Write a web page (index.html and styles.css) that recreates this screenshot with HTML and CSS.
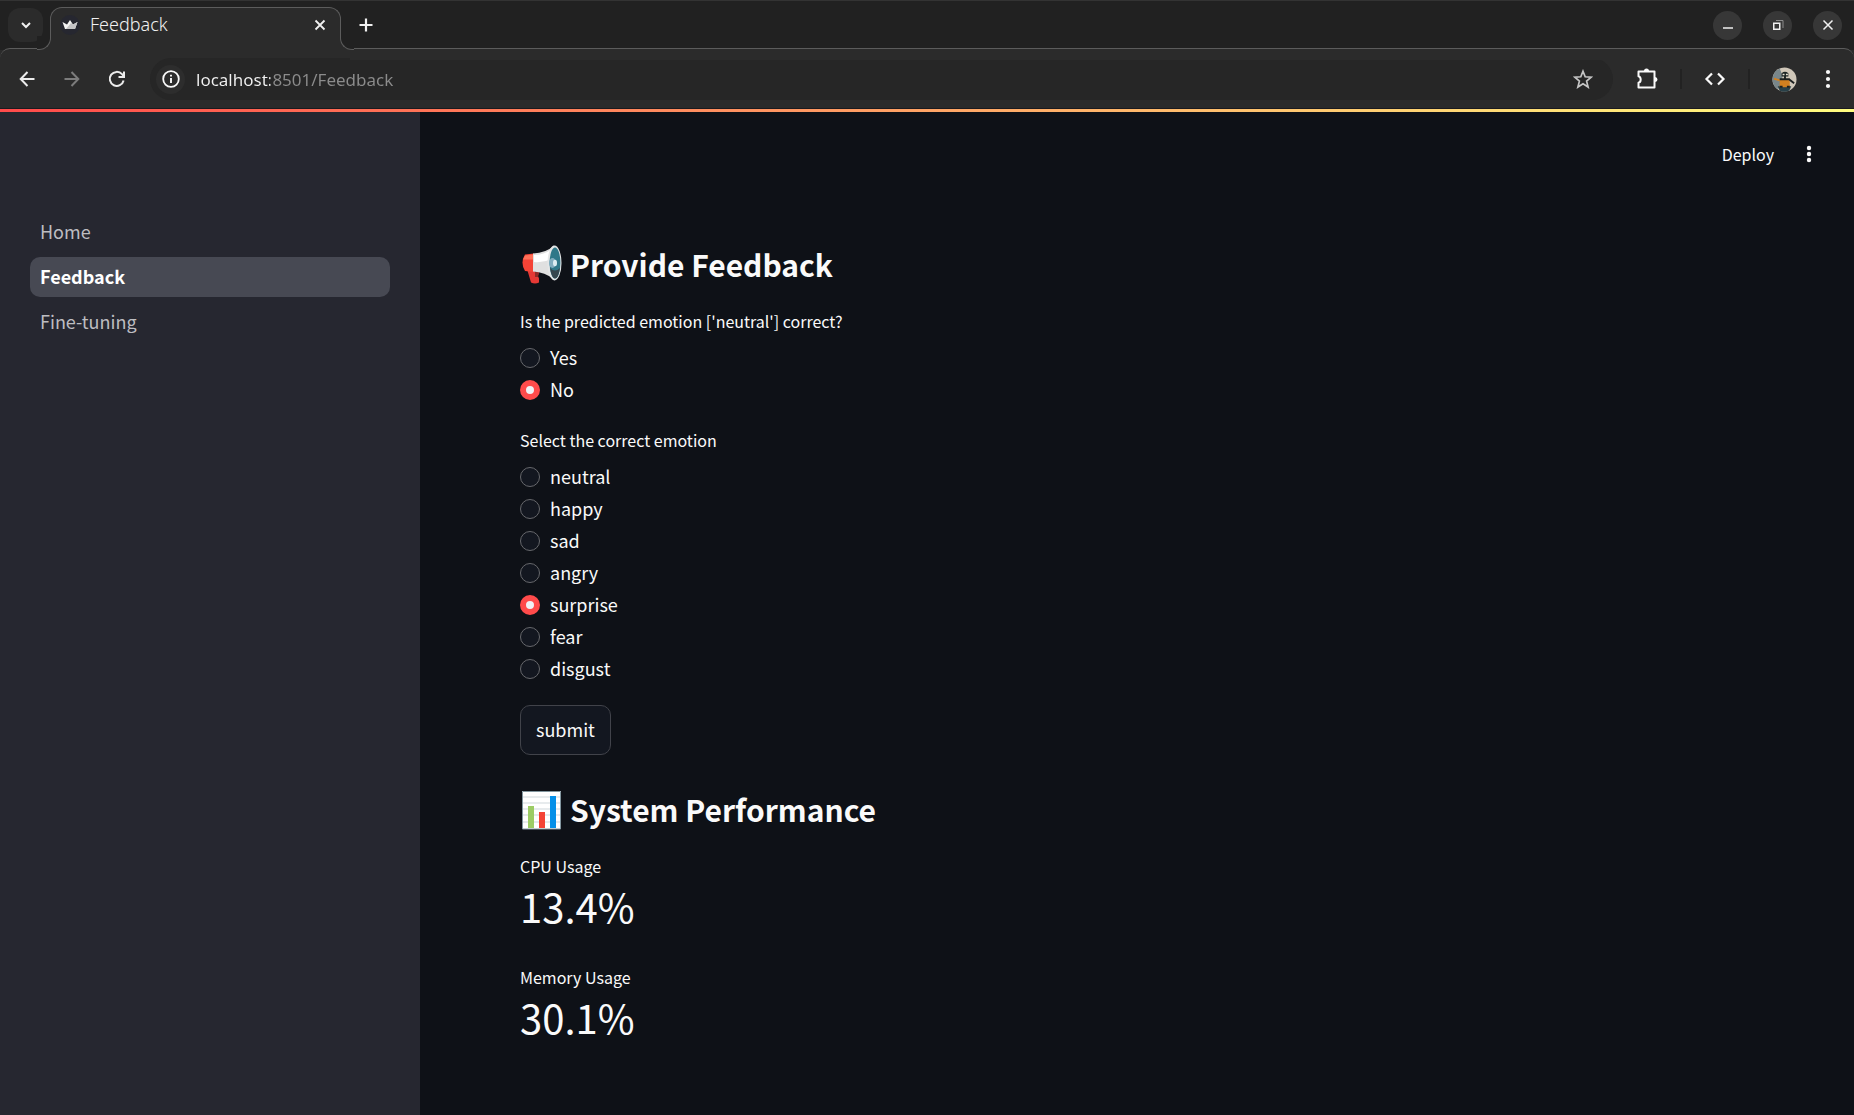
FILE: index.html
```html
<!DOCTYPE html>
<html lang="en">
<head>
<meta charset="utf-8">
<title>Feedback</title>
<link rel="stylesheet" href="styles.css">
</head>
<body>
<div class="window">
  <header class="tabstrip">
    <button class="tab-search" aria-label="Search tabs"><svg width="12" height="12" viewBox="0 0 12 12"><path d="M2 4l4 4 4-4" fill="none" stroke="currentColor" stroke-width="2"/></svg></button>
    <div class="tab">
      <svg class="favicon" width="20" height="20" viewBox="0 0 20 20"><circle cx="10" cy="10" r="10" fill="#262730"/><path d="M2.500 7l4.500 2.500L10 5l3 4.500L17.500 7 15 14H5z" fill="#f4f4f4"/><path d="M17.500 7L13 9.500 11 8l-5 6h9z" fill="#c4c4c6"/></svg>
      <span class="tab-title">Feedback</span>
      <button class="tab-close" aria-label="Close tab"><svg width="12" height="12" viewBox="0 0 12 12"><path d="M1.500 1.500l9 9M10.500 1.500l-9 9" stroke="currentColor" stroke-width="1.800"/></svg></button>
    </div>
    <button class="new-tab" aria-label="New tab"><svg width="14" height="14" viewBox="0 0 14 14"><path d="M7 .5v13M.5 7h13" stroke="currentColor" stroke-width="2.200"/></svg></button>
    <div class="window-controls">
      <button aria-label="Minimize"><svg width="12" height="12" viewBox="0 0 12 12"><path d="M1 9h10" stroke="currentColor" stroke-width="1.500"/></svg></button>
      <button aria-label="Restore"><svg width="12" height="12" viewBox="0 0 12 12"><path d="M1.750 4.250h6v6h-6z" fill="none" stroke="currentColor" stroke-width="1.500"/><path d="M4 1.500h7V9" fill="none" stroke="#8c8c8c" stroke-width="1"/></svg></button>
      <button aria-label="Close"><svg width="12" height="12" viewBox="0 0 12 12"><path d="M1.500 1.500l9 9M10.500 1.500l-9 9" stroke="currentColor" stroke-width="1.500"/></svg></button>
    </div>
  </header>

  <div class="toolbar">
    <button class="nav-button" aria-label="Back"><svg width="16" height="16" viewBox="0 0 16 16"><path d="M15.500 8H2M8.500 1L1.700 8l6.800 7" fill="none" stroke="currentColor" stroke-width="2"/></svg></button>
    <button class="nav-button nav-button-off" aria-label="Forward"><svg width="16" height="16" viewBox="0 0 16 16"><path d="M.5 8H14M7.500 1l6.800 7-6.800 7" fill="none" stroke="currentColor" stroke-width="2"/></svg></button>
    <button class="nav-button" aria-label="Reload"><svg width="18" height="18" viewBox="0 0 18 18"><path d="M15.600 10.500A7 7 0 1 1 14 4.200L16 6.500" fill="none" stroke="currentColor" stroke-width="2"/><path d="M16 1.500V7h-5.500" fill="none" stroke="currentColor" stroke-width="2"/></svg></button>
    <div class="omnibox">
      <button class="site-info" aria-label="Site information"><svg width="18" height="18" viewBox="0 0 18 18"><circle cx="9" cy="9" r="7.800" fill="none" stroke="currentColor" stroke-width="1.800"/><path d="M9 8v5M9 4.800v1.800" stroke="currentColor" stroke-width="1.900"/></svg></button>
      <input class="address" type="text" aria-label="Address" value="localhost:8501/Feedback">
      <button class="star" aria-label="Bookmark"><svg width="20" height="20" viewBox="0 0 20 20"><path d="M10 2.200l2.200 5.600 6 .4-4.600 3.900 1.500 5.900-5.100-3.300-5.100 3.300 1.500-5.900L1.800 8.200l6-.4z" fill="none" stroke="currentColor" stroke-width="1.700"/></svg></button>
    </div>
    <div class="actions">
      <button aria-label="Extensions"><svg width="22" height="22" viewBox="0 0 22 22"><path d="M2.500 3.500h16v16h-16v-4.700c2.900-.6 2.900-6 0-6.600z" fill="none" stroke="currentColor" stroke-width="2" stroke-linejoin="round"/><path d="M8 3a2.500 2.500 0 0 1 5 0zM19 9a2.500 2.500 0 0 1 0 5z" fill="currentColor"/></svg></button>
      <i class="divider"></i>
      <button aria-label="Developer tools"><svg width="22" height="22" viewBox="0 0 22 22"><path d="M8 5.500L2.500 11 8 16.500M14 5.500l5.500 5.500-5.500 5.500" fill="none" stroke="currentColor" stroke-width="2.200"/></svg></button>
      <i class="divider"></i>
      <button aria-label="Profile"><svg width="25" height="25" viewBox="0 0 26 26"><circle cx="13" cy="13" r="12.500" fill="#cfc6b8"/><path d="M2 7A12.500 12.500 0 0 1 8 1.600L11 9 9 22 5 22.500A12.500 12.500 0 0 1 2 7z" fill="#78868a"/><path d="M6 20h14l-2 4.500a12.500 12.500 0 0 1-10 .3z" fill="#284048"/><path d="M10 6.500q3.500-3 7 0V10h-2.500v3h-2v-3H10z" fill="#1c2424"/><path d="M11 7h2v1.500h-2zM14.500 7h2v1.500h-2z" fill="#e8e4d4"/><path d="M8 13h10.500v8H8z" fill="#d08020"/><path d="M8 14l-6-2" stroke="#d08020" stroke-width="2"/><path d="M8 12.800h10.500M18 13l5 4M8 20.500h3M15.500 20.500h3" stroke="#1c2020" stroke-width="2"/></svg></button>
      <button class="browser-menu" aria-label="Browser menu"><svg width="6" height="20" viewBox="0 0 6 20"><g fill="currentColor"><circle cx="3" cy="3" r="2.100"/><circle cx="3" cy="10" r="2.100"/><circle cx="3" cy="17" r="2.100"/></g></svg></button>
    </div>
  </div>

  <div class="decoration"></div>

  <div class="app">
    <nav class="sidebar">
      <a href="#home">Home</a>
      <a class="current" href="#feedback" aria-current="page">Feedback</a>
      <a href="#fine-tuning">Fine-tuning</a>
    </nav>
    <div class="page">
      <div class="app-header">
        <button class="deploy">Deploy</button>
        <button class="app-menu" aria-label="Main menu"><svg width="6" height="18" viewBox="0 0 6 18"><g fill="currentColor"><circle cx="3" cy="3" r="2.200"/><circle cx="3" cy="9" r="2.200"/><circle cx="3" cy="15" r="2.200"/></g></svg></button>
      </div>
      <main class="content">
        <h2>
          <svg width="42" height="42" viewBox="0 0 42 42" aria-hidden="true"><path d="M7 25l7 1 1 2 4 0-1 4 1 2.500v4q-4 2-8 0z" fill="#e53935"/><path d="M15 28h4l-1 5h-3z" fill="#8e2a26"/><path d="M5 10.500q-5 8 0 16.500l9 1V9.500z" fill="#f44336"/><path d="M5 11.500l9-1v5H3z" fill="#ff7058"/><path d="M13 9.500Q26 9 34 1.500v34Q25 28 13 27.500z" fill="#e0e0e0"/><path d="M14 11q10 0 18-6v10q-9 4-18 3z" fill="#fff"/><ellipse cx="34.500" cy="19" rx="7" ry="17.500" fill="#e4e6e7"/><ellipse cx="35" cy="19" rx="5.400" ry="15.500" fill="#2f7889"/><path d="M30 24q5 5 10 0-1.500 10-5 10.500-3.500-.5-5-10.500z" fill="#37474f"/><ellipse cx="32.500" cy="19" rx="3.500" ry="5" fill="#82aec0"/><ellipse cx="35" cy="19" rx="2" ry="3.300" fill="#dcedf2"/></svg>
          <span>Provide Feedback</span>
        </h2>
        <form>
          <fieldset>
            <legend>Is the predicted emotion ['neutral'] correct?</legend>
            <label><input type="radio" name="correct"><span>Yes</span></label>
            <label><input type="radio" name="correct" checked><span>No</span></label>
          </fieldset>
          <fieldset>
            <legend>Select the correct emotion</legend>
            <label><input type="radio" name="emotion"><span>neutral</span></label>
            <label><input type="radio" name="emotion"><span>happy</span></label>
            <label><input type="radio" name="emotion"><span>sad</span></label>
            <label><input type="radio" name="emotion"><span>angry</span></label>
            <label><input type="radio" name="emotion" checked><span>surprise</span></label>
            <label><input type="radio" name="emotion"><span>fear</span></label>
            <label><input type="radio" name="emotion"><span>disgust</span></label>
          </fieldset>
          <button class="submit" type="submit">submit</button>
        </form>
        <h2>
          <svg width="42" height="42" viewBox="0 0 42 42" aria-hidden="true"><path d="M2 2h39v38H2z" fill="#fff"/><path d="M3 8h37M3 14h37M3 20h37M3 26h37M3 33h37" stroke="#cfd8dc" stroke-width="1.200"/><path d="M2.500 2.500h38v37.500h-38z" fill="none" stroke="#82969f"/><path d="M8 17h6v22H8z" fill="#9ccc65"/><path d="M19 23h6v16h-6z" fill="#f44336"/><path d="M30 7h6v32h-6z" fill="#0590e8"/></svg>
          <span>System Performance</span>
        </h2>
        <dl>
          <div><dt>CPU Usage</dt><dd>13.4%</dd></div>
          <div><dt>Memory Usage</dt><dd>30.1%</dd></div>
        </dl>
      </main>
    </div>
  </div>
</div>
</body>
</html>
```
FILE: styles.css
```css
* { box-sizing: border-box; }
body {
  margin: 0;
  background: #0e1117;
  color: #fafafa;
  font: 18px/30px "Noto Sans CJK SC", sans-serif;
}
button {
  display: flex;
  align-items: center;
  justify-content: center;
  padding: 0;
  border: 0;
  background: none;
  color: inherit;
  font: inherit;
}
svg { display: block; flex: none; }

.window { display: flex; flex-direction: column; min-height: 100vh; }

/* Browser tab strip */
.tabstrip {
  display: flex;
  align-items: center;
  height: 50px;
  padding: 0 12px 0 8px;
  background: linear-gradient(#333 1px, #212121 1px);
  color: #f0f0f0;
  font-family: "Noto Sans", sans-serif;
  position: relative;
}
.tabstrip::before,
.tabstrip::after {
  content: "";
  position: absolute;
  bottom: -10px;
  height: 11px;
  border-top: 1px solid #5c5c5c;
  background: #2b2b2b;
}
.tabstrip::before { left: 0; width: 40px; border-radius: 10px 0 0 0; }
.tabstrip::after { left: 350px; right: 0; border-radius: 0 10px 0 0; }
.tab-search {
  width: 35px;
  height: 34px;
  border-radius: 12px;
  background: #2b2b2b;
}
.tab {
  position: relative;
  display: flex;
  align-items: center;
  gap: 10px;
  align-self: flex-end;
  width: 291px;
  height: 43px;
  margin-left: 7px;
  padding: 0 12px 8px 9px;
  border: 1px solid #5c5c5c;
  border-bottom: 0;
  border-radius: 12px 12px 0 0;
  background: #2b2b2b;
  z-index: 1;
}
.tab::before,
.tab::after {
  content: "";
  position: absolute;
  bottom: 0;
  width: 13px;
  height: 13px;
  border-bottom: 1px solid #5c5c5c;
  background: #212121;
}
.tab::before { right: 100%; border-right: 1px solid #5c5c5c; border-radius: 0 0 12px 0; box-shadow: 4px 4px 0 #2b2b2b; clip-path: inset(0 -1px 0 0); }
.tab::after { left: 100%; border-left: 1px solid #5c5c5c; border-radius: 0 0 0 12px; box-shadow: -4px 4px 0 #2b2b2b; clip-path: inset(0 0 0 -1px); }
.tab-title { flex: 1; padding-bottom: 2px; font-size: 18px; font-weight: 300; line-height: 26px; }
.tab-close { width: 16px; height: 24px; }
.new-tab { width: 34px; height: 34px; margin-left: 8px; }
.window-controls { display: flex; gap: 21px; margin-left: auto; }
.window-controls button {
  width: 29px;
  height: 29px;
  border-radius: 50%;
  background: #373737;
}

/* Browser toolbar */
.toolbar {
  display: flex;
  align-items: center;
  height: 59px;
  padding: 0 23px 0 9px;
  background: #2b2b2b;
  border-bottom: 1px solid #1a1a1f;
}
.nav-button { width: 35px; height: 36px; margin-right: 10px; color: #ececec; }
.nav-button-off { color: #7c7c7c; }
.omnibox {
  display: flex;
  align-items: center;
  flex: 1;
  height: 42px;
  margin-left: 6px;
  padding: 0 20px 0 6px;
  border-radius: 21px;
  background: #262626;
}
.site-info { width: 29px; height: 29px; border-radius: 50%; background: #2d2d2d; }
.address {
  flex: 1;
  min-width: 0;
  height: 30px;
  margin-left: 11px;
  padding: 0;
  border: 0;
  outline: 0;
  background: linear-gradient(90deg, #f2f2f2 74px, #8c8c8c 74px) text;
  -webkit-text-fill-color: transparent;
  font: 400 17px "Noto Sans", sans-serif;
}
.star { color: #c6c6c6; }
.actions { display: flex; align-items: center; gap: 22px; padding-left: 23px; }
.browser-menu { margin-left: 6px; }
.divider { width: 2px; height: 20px; background: #222; }

.decoration { height: 3px; background: linear-gradient(90deg, #ff4b4b, #fffd80); }

/* Application */
.app { display: flex; flex: 1; }
.sidebar {
  display: flex;
  flex-direction: column;
  gap: 5px;
  width: 420px;
  padding: 100px 30px;
  background: #262730;
}
.sidebar a {
  height: 40px;
  padding: 0 10px;
  border-radius: 10px;
  color: #bdbdc1;
  line-height: 38px;
  text-decoration: none;
}
.sidebar .current { background: #474953; color: #fff; font-weight: 700; }
.page { flex: 1; }
.app-header {
  display: flex;
  align-items: center;
  justify-content: flex-end;
  gap: 32px;
  height: 84px;
  padding-right: 42px;
}
.deploy { font-size: 16px; }
.content { padding: 48px 100px; }
h2 {
  display: flex;
  align-items: center;
  gap: 8px;
  height: 42px;
  margin: 0 0 22px;
  font-size: 30px;
  font-weight: 700;
}
h2 span, label span { padding-bottom: 2px; }
fieldset { margin: 0 0 20px; padding: 0; border: 0; }
fieldset:first-child { margin-bottom: 21px; }
legend { height: 34px; padding: 0; font-size: 16px; line-height: 26px; }
label { display: flex; align-items: center; gap: 10px; height: 32px; }
input[type="radio"] {
  appearance: none;
  width: 20px;
  height: 20px;
  margin: 0;
  border: 1px solid #67686c;
  border-radius: 50%;
  background: #131720;
}
input[type="radio"]:checked { border: 6px solid #ff4b4b; background: #f0f2f6; }
.submit {
  height: 50px;
  margin-bottom: 34px;
  padding: 0 15px 2px;
  border: 1px solid #41434a;
  border-radius: 10px;
  background: #131720;
}
dl { display: grid; gap: 31px; margin: 0; }
dt { font-size: 16px; line-height: 26px; }
dd { margin: 0; font-size: 40px; line-height: 54px; }
```
